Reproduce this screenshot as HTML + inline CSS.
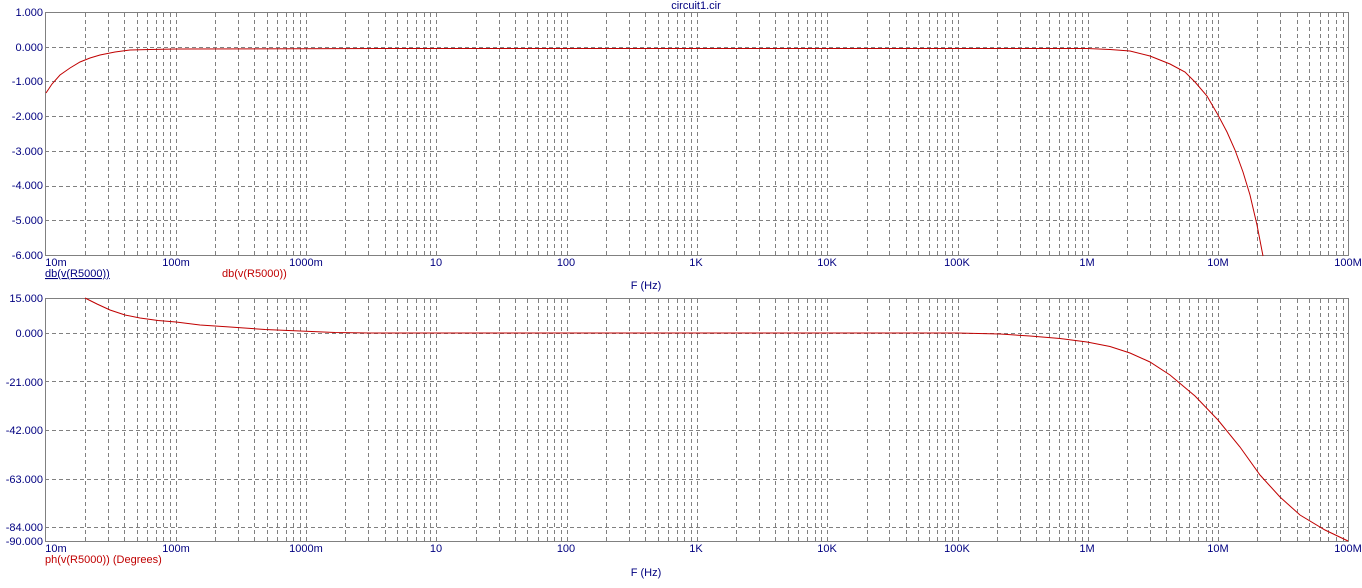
<!DOCTYPE html><html><head><meta charset="utf-8"><style>
body{margin:0;background:#fff;width:1362px;height:583px;overflow:hidden;font-family:"Liberation Sans",sans-serif}
svg text{font-family:"Liberation Sans",sans-serif;font-size:11px}
</style></head><body>
<svg id="s" width="1362" height="583" xmlns="http://www.w3.org/2000/svg">
<g id="g"></g>
<rect x="45.5" y="12.5" width="1303" height="243" fill="none" stroke="#808080"/>
<rect x="45.5" y="298.5" width="1303" height="243" fill="none" stroke="#808080"/>
<g fill="#000080">
<text x="696" y="9" text-anchor="middle">circuit1.cir</text>
<g text-anchor="end">
<text x="43" y="16">1.000</text><text x="43" y="51">0.000</text><text x="43" y="85">-1.000</text><text x="43" y="120">-2.000</text><text x="43" y="155">-3.000</text><text x="43" y="189">-4.000</text><text x="43" y="224">-5.000</text><text x="43" y="259">-6.000</text>
<text x="43" y="302">15.000</text><text x="43" y="337">0.000</text><text x="43" y="386">-21.000</text><text x="43" y="434">-42.000</text><text x="43" y="483">-63.000</text><text x="43" y="531">-84.000</text><text x="43" y="545">-90.000</text>
</g>
<g text-anchor="middle" id="xl1">
<text x="56" y="266">10m</text><text x="176" y="266">100m</text><text x="306" y="266">1000m</text><text x="436" y="266">10</text><text x="566" y="266">100</text><text x="696" y="266">1K</text><text x="827" y="266">10K</text><text x="957" y="266">100K</text><text x="1087" y="266">1M</text><text x="1218" y="266">10M</text><text x="1348" y="266">100M</text>
</g>
<g text-anchor="middle">
<text x="56" y="552">10m</text><text x="176" y="552">100m</text><text x="306" y="552">1000m</text><text x="436" y="552">10</text><text x="566" y="552">100</text><text x="696" y="552">1K</text><text x="827" y="552">10K</text><text x="957" y="552">100K</text><text x="1087" y="552">1M</text><text x="1218" y="552">10M</text><text x="1348" y="552">100M</text>
</g>
<text x="45" y="277" text-decoration="underline">db(v(R5000))</text>
<text x="646" y="289" text-anchor="middle">F (Hz)</text>
<text x="646" y="576" text-anchor="middle">F (Hz)</text>
</g>
<g fill="#c00000"><text x="222" y="277">db(v(R5000))</text><text x="45" y="563">ph(v(R5000)) (Degrees)</text></g>
<polyline fill="none" stroke="#c00000" points="46,93 52,84 60,75 70,68 80,62 90,58 100,55 115,52 130,50 150,49.5 176,49 400,48.5 1087,48.5 1110,49.5 1130,51 1150,56 1170,64 1185,72 1195,82 1207,96 1218,115 1227,132 1235,150 1243,172 1250,195 1257,225 1263,256"/>
<polyline fill="none" stroke="#c00000" points="85,298 97,304 110,310 125,315 140,318 158,320.5 176,322 200,325 230,327 265,329.5 300,331 335,332.5 370,333 957,333 1000,334 1030,336 1060,338.5 1087,342 1110,346.5 1130,353 1150,362 1170,375 1195,396 1218,420 1240,447 1260,475 1280,497 1300,515 1325,530 1348,541"/>
</svg>
<script>
var g=document.getElementById('g'),h='';
var x0=45.5,w=1303,d=w/10;
function vl(x,y1,y2){h+='<line x1="'+x+'" y1="'+y1+'" x2="'+x+'" y2="'+y2+'" stroke="#808080" stroke-dasharray="4,3"/>';}
function hl(y){h+='<line x1="45" y1="'+y+'" x2="1348" y2="'+y+'" stroke="#808080" stroke-dasharray="4,3"/>';}
for(var k=0;k<10;k++)for(var m=1;m<=10;m++){var x=Math.round(x0+d*(k+Math.log10(m)))+0.5;if(m==1&&k==0)continue;if(m==10&&k==9)continue;vl(x,13,255);vl(x,299,541);}
for(var i=1;i<7;i++)hl(Math.round(12+243*i/7)+0.5);
[0,-21,-42,-63,-84].forEach(function(v){hl(Math.round(298+(15-v)*243/105)+0.5);});
g.innerHTML=h;
</script>
</body></html>
